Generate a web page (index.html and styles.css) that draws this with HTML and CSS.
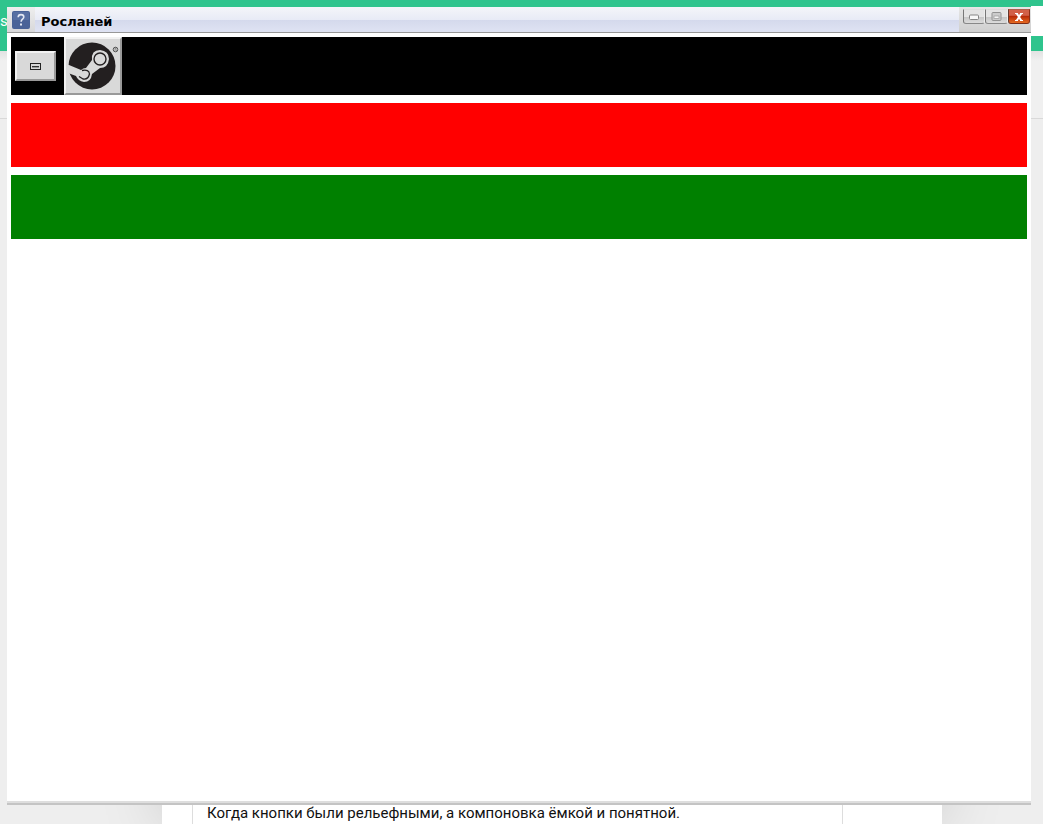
FILE: index.html
```html
<!DOCTYPE html>
<html lang="ru">
<head>
  <meta charset="UTF-8" />
  <meta name="viewport" content="width=device-width, initial-scale=1.0" />
  <title>Росланей</title>
  <link rel="stylesheet" href="styles.css">
</head>
<body>

  <header class="site-header">
    <a href="#" class="site-link">s</a>
    <input type="search" class="site-search" aria-label="Поиск">
  </header>
  <div class="site-nav"></div>
  <main class="site-main">
    <article class="page">
      <div class="post">
        <p>Когда кнопки были рельефными, а компоновка ёмкой и понятной.</p>
      </div>
    </article>
  </main>

  <!-- Окно поверх страницы -->
  <section class="window">
    <div class="titlebar">
      <div class="title-icon">
        <svg width="18" height="18" viewBox="0 0 18 18">
          <rect width="18" height="18" rx="2" fill="#4a6398"/>
          <rect x="1" y="1" width="16" height="8" rx="1" fill="#5870a3"/>
          <path d="M6.2 6.2C6.2 4.5 7.4 3.6 9 3.6s2.8 1 2.8 2.5c0 2.1-2.7 2.2-2.7 4.6" fill="none" stroke="#e4e9f4" stroke-width="1.6"/>
          <rect x="8" y="12.5" width="2" height="2" fill="#e4e9f4"/>
        </svg>
      </div>
      <h1 class="title">Росланей</h1>
      <div class="controls">
        <button class="control" aria-label="Свернуть">
          <svg width="10" height="6" viewBox="0 0 10 6"><rect x=".5" y="1" width="9" height="4.5" rx="1" fill="#f8f8f8" stroke="#858585"/></svg>
        </button>
        <button class="control" aria-label="Развернуть">
          <svg width="11" height="9" viewBox="0 0 11 9"><rect x="1" y=".5" width="9" height="8" rx="1" fill="#ccc" stroke="#929292"/><rect x="3" y="4" width="5" height="2.5" fill="#f4f4f4" stroke="#999" stroke-width=".7"/></svg>
        </button>
        <button class="control close" aria-label="Закрыть">
          <svg width="8" height="8" viewBox="0 0 8 8"><path d="M1.5 0l5 8M6.5 0l-5 8" stroke="#fff" stroke-width="2"/><path d="M0 .5h3M5 .5h3M0 7.5h3M5 7.5h3" stroke="#fff"/></svg>
        </button>
      </div>
    </div>

    <div class="content">
      <div class="bar toolbar">
        <button class="tool small" aria-label="Панель">
          <svg width="11" height="7" viewBox="0 0 11 7" shape-rendering="crispEdges"><rect x=".5" y=".5" width="10" height="6" fill="#d8d8d8" stroke="#222"/><path d="M2 3.5h7" stroke="#333"/><path d="M2 4.5h7" stroke="#999"/></svg>
        </button>
        <button class="tool" aria-label="Steam">
          <svg width="54" height="54" viewBox="0 0 54 54">
            <circle cx="26" cy="27" r="23.5" fill="#231f20"/>
            <path d="M0 26H3L15 31Q17 29 20 29L26 21Q25 11 34 11Q43 12 43 20Q42 29 34 29L26 35Q25 43 18 43Q12 42 10 37L2 34Z" fill="#d9d9d9"/>
            <circle cx="34" cy="20" r="6" fill="#d9d9d9" stroke="#231f20" stroke-width="1.4"/>
            <path d="M16 31.5Q23 30 23.5 35Q22 41 17 40L13 37.5" fill="none" stroke="#231f20" stroke-width="1.3"/>
            <circle cx="49.5" cy="10.5" r="2.3" fill="none" stroke="#333" stroke-width=".8"/>
            <path d="M49 12v-3h1v1.5l.6 1.5" fill="none" stroke="#555" stroke-width=".5"/>
          </svg>
        </button>
      </div>
      <div class="bar red"></div>
      <div class="bar green"></div>
    </div>
  </section>

</body>
</html>
```

FILE: styles.css
```css
* {
  box-sizing: border-box;
}

body {
  margin: 0;
  height: 100vh;
  display: flex;
  flex-direction: column;
  overflow: hidden;
  position: relative;
  background: #eeeeee;
  font-family: Roboto, sans-serif;
}

/* страница */
.site-header {
  display: flex;
  justify-content: space-between;
  height: 51px;
  padding: 6px 0;
  background: #2fc48d;
}

.site-link {
  color: white;
  font-size: 15px;
  line-height: 30px;
  text-decoration: none;
}

.site-search {
  width: 12px;
  height: 30px;
  padding: 0;
  border: none;
  background: white;
}

.site-nav {
  height: 68px;
  border-bottom: 1px solid #d9d9d9;
  background: linear-gradient(#e2e2e2, #f0f0f0 10px);
}

.site-main {
  flex: 1;
  display: flex;
  justify-content: center;
  padding-left: 61px;
}

.page {
  display: flex;
  width: 780px;
  padding: 0 99px 0 30px;
  background: white;
  box-shadow: 0 0 60px rgba(0, 0, 0, 0.15);
}

.post {
  flex: 1;
  display: flex;
  align-items: flex-end;
  padding: 0 14px;
  border: 1px solid #dddddd;
  border-width: 0 1px;
}

.post p {
  margin: 0;
  font-size: 15px;
  line-height: 22px;
  color: #111;
}

/* окно */
.window {
  position: absolute;
  inset: 7px 12px 19px 7px;
  display: flex;
  flex-direction: column;
  background: white;
  border-bottom: 2px solid #c4c4c4;
  box-shadow: inset 0 -2px #dedede;
}

.titlebar {
  display: flex;
  height: 26px;
  border-bottom: 1px solid #989898;
  background: linear-gradient(#f4f5f9, #e8ebf6 50%, #d4d9ec 51%, #dfe3f3);
}

.title-icon {
  display: flex;
  width: 28px;
  padding: 4px 5px;
  background: linear-gradient(#eeeeee, #d8d8da);
}

.title {
  flex: 1;
  margin: 0;
  padding-left: 6px;
  font-family: "DejaVu Sans", sans-serif;
  font-size: 13px;
  line-height: 30px;
  color: black;
}

.controls {
  display: flex;
  width: 72px;
  padding: 2px 1px 8px 4px;
  background: linear-gradient(#e6e6e6, #cfcfcf);
}

.control {
  flex: 1;
  display: flex;
  align-items: center;
  justify-content: center;
  padding: 0;
  border: 1px solid #888888;
  border-color: #dddddd #eeeeee #888888 #777777;
  border-radius: 0 0 3px 3px;
  background: linear-gradient(#e4e4e4 50%, #c5c5c5 51%, #dcdcdc);
}

.close {
  border-color: #aa604c #8c3018 #7c2c18 #63382d;
  background: linear-gradient(#d26047 40%, #b92c08 50%, #e66b22);
}

.content {
  display: flex;
  flex-direction: column;
  gap: 8px;
  padding: 4px;
}

.bar {
  height: 64px;
}

.toolbar {
  display: flex;
  align-items: center;
  gap: 8px;
  height: 58px;
  padding-left: 4px;
  background: black;
}

.red {
  background: #ff0000;
}

.green {
  background: #008000;
}

.tool {
  display: flex;
  align-items: center;
  justify-content: center;
  width: 58px;
  height: 58px;
  padding: 0;
  border: 2px solid #999999;
  border-color: #f2f2f2 #999999 #999999 #f2f2f2;
  background: #d9d9d9;
}

.small {
  width: 41px;
  height: 30px;
}
```
